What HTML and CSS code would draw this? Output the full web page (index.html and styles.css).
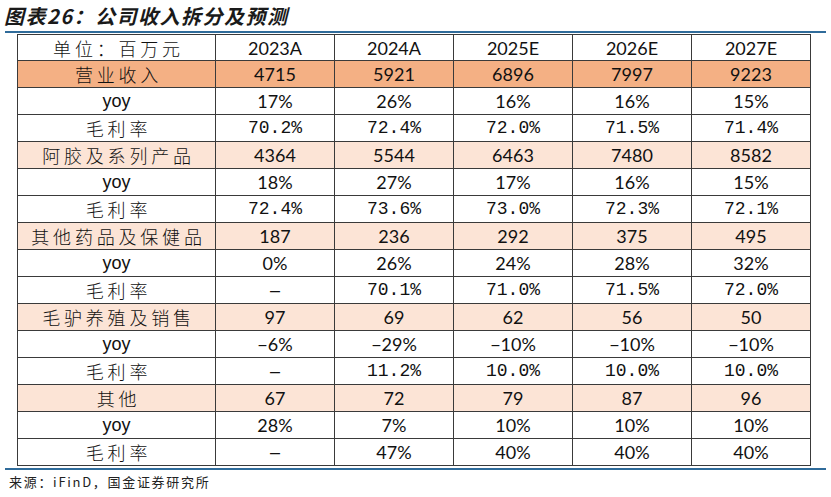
FILE: index.html
```html
<!DOCTYPE html>
<html lang="zh-CN">
<head>
<meta charset="utf-8">
<title>公司收入拆分及预测</title>
<link rel="stylesheet" href="styles.css">
</head>
<body>
<div class="page">
  <div class="title">图表26：公司收入拆分及预测</div>
  <div class="rule"></div>
  <table class="data">
    <colgroup><col class="c0"><col><col><col><col><col></colgroup>
    <tr class="head"><td class="lbl">单位：百万元</td><td>2023A</td><td>2024A</td><td>2025E</td><td>2026E</td><td>2027E</td></tr>
    <tr class="main"><td class="lbl">营业收入</td><td>4715</td><td>5921</td><td>6896</td><td>7997</td><td>9223</td></tr>
    <tr><td class="yoy">yoy</td><td>17%</td><td>26%</td><td>16%</td><td>16%</td><td>15%</td></tr>
    <tr><td class="lbl">毛利率</td><td class="dec">70.2%</td><td class="dec">72.4%</td><td class="dec">72.0%</td><td class="dec">71.5%</td><td class="dec">71.4%</td></tr>
    <tr class="sub"><td class="lbl">阿胶及系列产品</td><td>4364</td><td>5544</td><td>6463</td><td>7480</td><td>8582</td></tr>
    <tr><td class="yoy">yoy</td><td>18%</td><td>27%</td><td>17%</td><td>16%</td><td>15%</td></tr>
    <tr><td class="lbl">毛利率</td><td class="dec">72.4%</td><td class="dec">73.6%</td><td class="dec">73.0%</td><td class="dec">72.3%</td><td class="dec">72.1%</td></tr>
    <tr class="sub"><td class="lbl">其他药品及保健品</td><td>187</td><td>236</td><td>292</td><td>375</td><td>495</td></tr>
    <tr><td class="yoy">yoy</td><td>0%</td><td>26%</td><td>24%</td><td>28%</td><td>32%</td></tr>
    <tr><td class="lbl">毛利率</td><td class="nil">–</td><td class="dec">70.1%</td><td class="dec">71.0%</td><td class="dec">71.5%</td><td class="dec">72.0%</td></tr>
    <tr class="sub"><td class="lbl">毛驴养殖及销售</td><td>97</td><td>69</td><td>62</td><td>56</td><td>50</td></tr>
    <tr><td class="yoy">yoy</td><td>−6%</td><td>−29%</td><td>−10%</td><td>−10%</td><td>−10%</td></tr>
    <tr><td class="lbl">毛利率</td><td class="nil">–</td><td class="dec">11.2%</td><td class="dec">10.0%</td><td class="dec">10.0%</td><td class="dec">10.0%</td></tr>
    <tr class="sub"><td class="lbl">其他</td><td>67</td><td>72</td><td>79</td><td>87</td><td>96</td></tr>
    <tr><td class="yoy">yoy</td><td>28%</td><td>7%</td><td>10%</td><td>10%</td><td>10%</td></tr>
    <tr><td class="lbl">毛利率</td><td class="nil">–</td><td>47%</td><td>40%</td><td>40%</td><td>40%</td></tr>
  </table>
  <div class="rule bottom"></div>
  <div class="source">来源：iFinD，国金证券研究所</div>
</div>
</body>
</html>
```
FILE: styles.css
```css
html, body {
  margin: 0;
  padding: 0;
  background: #ffffff;
}
.page {
  width: 831px;
  height: 497px;
  position: relative;
  color: #111;
}
.title {
  height: 31px;
  box-sizing: border-box;
  padding: 4px 0 0 4px;
  font-family: "Noto Sans CJK SC", sans-serif;
  font-size: 20px;
  line-height: 24px;
  font-weight: bold;
  font-style: italic;
  letter-spacing: 1.5px;
  color: #1a1a1a;
}
.rule {
  margin-left: 5px;
  width: 821px;
  height: 2px;
  background: #2f6b9a;
}
.data {
  margin: 1px 0 0 17px;
  width: 793px;
  border-collapse: collapse;
  table-layout: fixed;
}
.data col { width: 119px; }
.data col.c0 { width: 198px; }
.data td {
  height: 26px;
  padding: 0;
  border: 1px solid #3a3a3a;
  text-align: center;
  vertical-align: middle;
  font-family: "Lato", "Liberation Sans", sans-serif;
  font-size: 18px;
  line-height: 20px;
  color: #111;
}
.data tr.head td { height: 25px; background: #fff; }
.data tr.main td { background: #f4b084; }
.data tr.sub td { background: #fce4d6; }
.data td.lbl {
  font-family: "Noto Sans CJK SC", sans-serif;
  font-size: 18px;
  font-weight: 300;
  letter-spacing: 3.8px;
  padding-left: 4px;
}
.data td.yoy {
  font-family: "Liberation Sans", sans-serif;
  font-size: 18px;
}
.data td.dec {
  font-family: "Liberation Mono", monospace;
  font-size: 18px;
}
.data td.nil {
  font-family: "Liberation Sans", sans-serif;
}
.rule.bottom {
  margin-top: 2px;
}
.source {
  padding: 4px 0 0 9px;
  font-family: "Noto Sans CJK SC", sans-serif;
  font-size: 13px;
  line-height: 16px;
  letter-spacing: 1.7px;
  color: #222;
}
```
